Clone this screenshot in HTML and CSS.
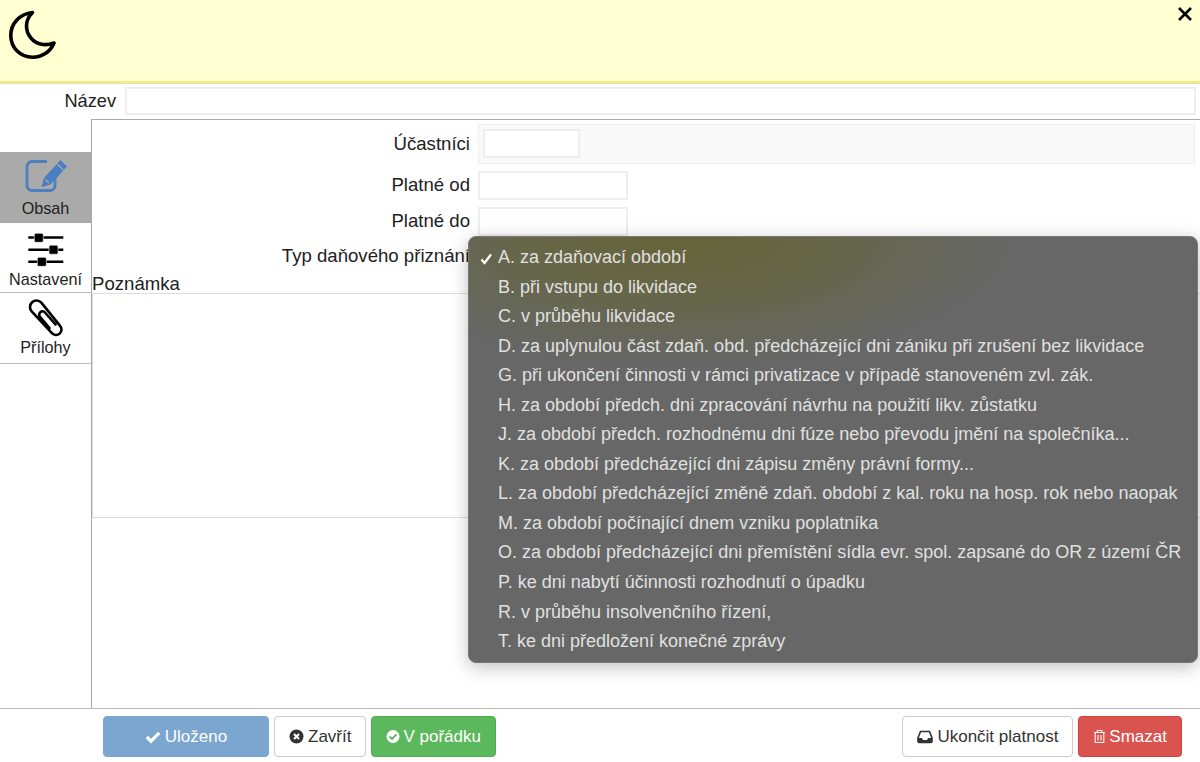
FILE: index.html
```html
<!DOCTYPE html>
<html lang="cs">
<head>
<meta charset="utf-8">
<title>Daňové přiznání</title>
<link rel="stylesheet" href="styles.css">
</head>
<body>
<div class="app">
  <header class="head">
    <svg class="moon" width="60" height="60" viewBox="0 0 60 60"><path d="M32.500 12.500C19 14 10.800 24 10.800 35.500 10.800 48 20.500 57.300 32.500 57.300 42.500 57.300 50.500 51.500 54 43 50 44.500 46 44.800 43 44.500 32 43.500 26.500 33.500 26.500 26 26.500 20.500 29 16 32.500 12.500Z" fill="none" stroke="#000" stroke-width="3.600" stroke-linejoin="round"/></svg>
    <svg class="close" width="16" height="16" viewBox="0 0 16 16"><path d="M2 2l12 12M14 2L2 14" stroke="#000" stroke-width="2.600" fill="none"/></svg>
  </header>
  <div class="name-row">
    <label class="name-label">Název</label>
    <div class="input name-input"></div>
  </div>
  <div class="main">
    <nav class="side">
      <div class="tab tab-content active">
        <svg width="52" height="42" viewBox="0 0 52 42"><path d="M27 6.500H12a5 5 0 0 0-5 5V30.500a5 5 0 0 0 5 5h18a5 5 0 0 0 5-5V22" fill="none" stroke="#4a7fc1" stroke-width="2.800"/><path d="M22 31.500l2.500-8.500L40.500 5.500 46.500 11.500 30.500 29z" fill="#4a7fc1" stroke="#4a7fc1" stroke-width="1" stroke-linejoin="round"/><path d="M37.300 9l6 6M25.500 24.500l3.500 3.500" stroke="#aaa" stroke-width="1.200"/></svg>
        <span>Obsah</span>
      </div>
      <div class="tab tab-settings">
        <svg width="52" height="40" viewBox="0 0 52 40"><path d="M8.300 7.500h35M8.300 19.700h35M8.300 31.700h35" stroke="#000" stroke-width="2.600"/><rect x="14.300" y="3.300" width="9" height="9" rx="1.500" stroke="#fff" stroke-width=".6"/><rect x="29" y="15.200" width="9" height="9" rx="1.500" stroke="#fff" stroke-width=".6"/><rect x="17.300" y="27.300" width="9" height="9" rx="1.500" stroke="#fff" stroke-width=".6"/></svg>
        <span>Nastavení</span>
      </div>
      <div class="tab tab-files">
        <svg width="52" height="42" viewBox="0 0 52 42"><path d="M21.300 5.600L40.100 28.800A5.500 5.500 0 0 1 31.900 36.200L11.700 14.400A6.500 6.500 0 0 1 21.300 5.600M35.500 27.500L25 15.500A3.200 3.200 0 0 0 20 19.800L29.500 31" fill="none" stroke="#000" stroke-width="2.600" stroke-linecap="round"/></svg>
        <span>Přílohy</span>
      </div>
    </nav>
    <section class="content">
      <div class="form-row people-row">
        <label>Účastníci</label>
        <div class="people"><div class="input people-input"></div></div>
      </div>
      <div class="form-row date-row">
        <label>Platné od</label>
        <div class="input date"></div>
      </div>
      <div class="form-row date-row">
        <label>Platné do</label>
        <div class="input date"></div>
      </div>
      <div class="form-row type-row">
        <label>Typ daňového přiznání</label>
      </div>
      <div class="note-label">Poznámka</div>
      <div class="note"></div>
    </section>
  </div>
  <footer class="foot">
    <div class="btns">
      <button class="btn btn-saved"><svg width="16" height="14" viewBox="0 0 16 14"><path d="M1.800 7l4.200 4.200 8.200-8.400" fill="none" stroke="#fff" stroke-width="3.200"/></svg>Uloženo</button>
      <button class="btn"><svg width="15" height="15" viewBox="0 0 15 15"><circle cx="7.500" cy="7.500" r="7" fill="#333"/><path d="M5 5l5 5M10 5l-5 5" stroke="#fff" stroke-width="2"/></svg>Zavřít</button>
      <button class="btn btn-ok"><svg width="14" height="15" viewBox="0 0 15 15"><circle cx="7.500" cy="7.500" r="7" fill="#fff"/><path d="M3.800 7.500l2.700 2.700 4.700-4.900" fill="none" stroke="#5cb85c" stroke-width="2"/></svg>V pořádku</button>
    </div>
    <div class="btns">
      <button class="btn btn-end"><svg width="16" height="14" viewBox="0 0 16 14"><path d="M3.500 1.500h9L15 8v3.500a1 1 0 0 1-1 1H2a1 1 0 0 1-1-1V8z" fill="none" stroke="#333" stroke-width="1.600"/><path d="M1 8h4l1 2h4l1-2h4v4.500H1z" fill="#333"/></svg>Ukončit platnost</button>
      <button class="btn btn-del"><svg width="13" height="15" viewBox="0 0 13 15"><path d="M1 3.500h11M4.200 3.500V1.500h4.600v2M2.200 3.500v10h8.600v-10M5 6v5.500M8 6v5.500" fill="none" stroke="#fff" stroke-width="1.100"/></svg>Smazat</button>
    </div>
  </footer>
</div>
<ul class="menu">
  <li class="checked"><svg class="tick" width="13" height="12" viewBox="0 0 13 12"><path d="M1.500 6.500l3 3.500 6.500-8.500" fill="none" stroke="#fff" stroke-width="2.300"/></svg>A. za zdaňovací období</li>
  <li>B. při vstupu do likvidace</li>
  <li>C. v průběhu likvidace</li>
  <li>D. za uplynulou část zdaň. obd. předcházející dni zániku při zrušení bez likvidace</li>
  <li>G. při ukončení činnosti v rámci privatizace v případě stanoveném zvl. zák.</li>
  <li>H. za období předch. dni zpracování návrhu na použití likv. zůstatku</li>
  <li>J. za období předch. rozhodnému dni fúze nebo převodu jmění na společníka...</li>
  <li>K. za období předcházející dni zápisu změny právní formy...</li>
  <li>L. za období předcházející změně zdaň. období z kal. roku na hosp. rok nebo naopak</li>
  <li>M. za období počínající dnem vzniku poplatníka</li>
  <li>O. za období předcházející dni přemístění sídla evr. spol. zapsané do OR z území ČR</li>
  <li>P. ke dni nabytí účinnosti rozhodnutí o úpadku</li>
  <li>R. v průběhu insolvenčního řízení,</li>
  <li>T. ke dni předložení konečné zprávy</li>
</ul>
</body>
</html>
```
FILE: styles.css
```css
* { box-sizing: border-box; }
html, body { margin: 0; height: 100%; overflow: hidden; }
body { font-family: "Liberation Sans", Arial, sans-serif; font-size: 18.6px; color: #222; background: #fff; }
.app { height: 762px; display: flex; flex-direction: column; }
.head { height: 83px; flex: none; background: #ffffd2; border-bottom: 2px solid #f5f06a; box-shadow: 0 1px 0 #ddd; display: flex; justify-content: space-between; align-items: flex-start; padding: 6px 7px 0 0; }
.moon { margin-top: -6px; }
.name-row { height: 36px; flex: none; display: flex; align-items: center; padding: 0 4px 0 0; }
.name-label { width: 125px; padding-right: 9px; text-align: right; font-size: 18.200px; }
.input { background: #fff; border: 2px solid #eee; }
.name-input { flex: 1; height: 28px; }
.main { flex: 1; display: flex; min-height: 0; }
.side { width: 92px; flex: none; border-right: 1px solid #aaa; padding-top: 33px; }
.tab { display: flex; flex-direction: column; align-items: center; font-size: 16.200px; line-height: 20px; border-bottom: 1px solid #bbb; }
.tab span { display: block; }
.tab-content { height: 71px; padding-top: 3px; }
.tab-content svg { margin-bottom: 1px; }
.tab-settings { height: 70px; padding-top: 7px; }
.tab-settings svg { margin-bottom: -1px; }
.tab-files { height: 71px; padding-top: 4px; }
.tab-files svg { margin-bottom: -2px; }
.tab.active { background: #aaa; border-bottom: 0; }
.content { flex: 1; border-top: 1px solid #aaa; padding-top: 4px; display: flex; flex-direction: column; min-width: 0; }
.form-row { display: flex; }
.form-row label { width: 378px; flex: none; text-align: right; }
.people-row { height: 47px; align-items: flex-start; }
.people-row label { line-height: 40px; }
.people { margin-left: 8px; width: 717px; height: 40px; background: #f9f9f9; border: 1px solid #eee; padding: 4px; }
.people-input { width: 97px; height: 29px; }
.date-row { height: 36px; align-items: flex-start; }
.date-row label { line-height: 28px; }
.date { margin-left: 8px; width: 150px; height: 29px; }
.type-row { height: 30px; line-height: 26px; }
.note-label { height: 20px; line-height: 21px; }
.note { height: 225px; border: 1px solid #ddd; border-right: 0; }
.foot { height: 54px; flex: none; border-top: 1px solid #bbb; display: flex; justify-content: space-between; padding: 7px 18px 0 103px; }
.btns { display: flex; gap: 5px; }
.btn { height: 41px; font: inherit; font-size: 17px; color: #333; background: #fff; border: 1px solid #ccc; border-radius: 4px; padding: 0 14px; display: flex; align-items: center; justify-content: center; gap: 4px; }
.btn-saved { width: 166px; background: #7ba6cf; border-color: #7ba6cf; color: #fff; }
.btn-ok { background: #5cb85c; border-color: #4cae4c; color: #fff; gap: 3px; }
.btn-del { background: #d9534f; border-color: #d43f3a; color: #fff; gap: 3px; }
.menu { position: absolute; left: 468px; top: 236px; width: 730px; height: 427px; margin: 0; padding: 6px 0; list-style: none; border-radius: 8px; color: #e0e0e0; border: 1px solid #777; background: radial-gradient(ellipse 330px 130px at 210px 0, #66643a 0%, #666648 45%, rgba(102,103,102,0) 100%), #666766; box-shadow: 0 4px 18px rgba(0,0,0,.25); font-size: 18px; }
.menu li { height: 29.550px; line-height: 29.550px; padding-left: 29px; position: relative; white-space: nowrap; }
.tick { position: absolute; left: 11px; top: 10px; }
```
